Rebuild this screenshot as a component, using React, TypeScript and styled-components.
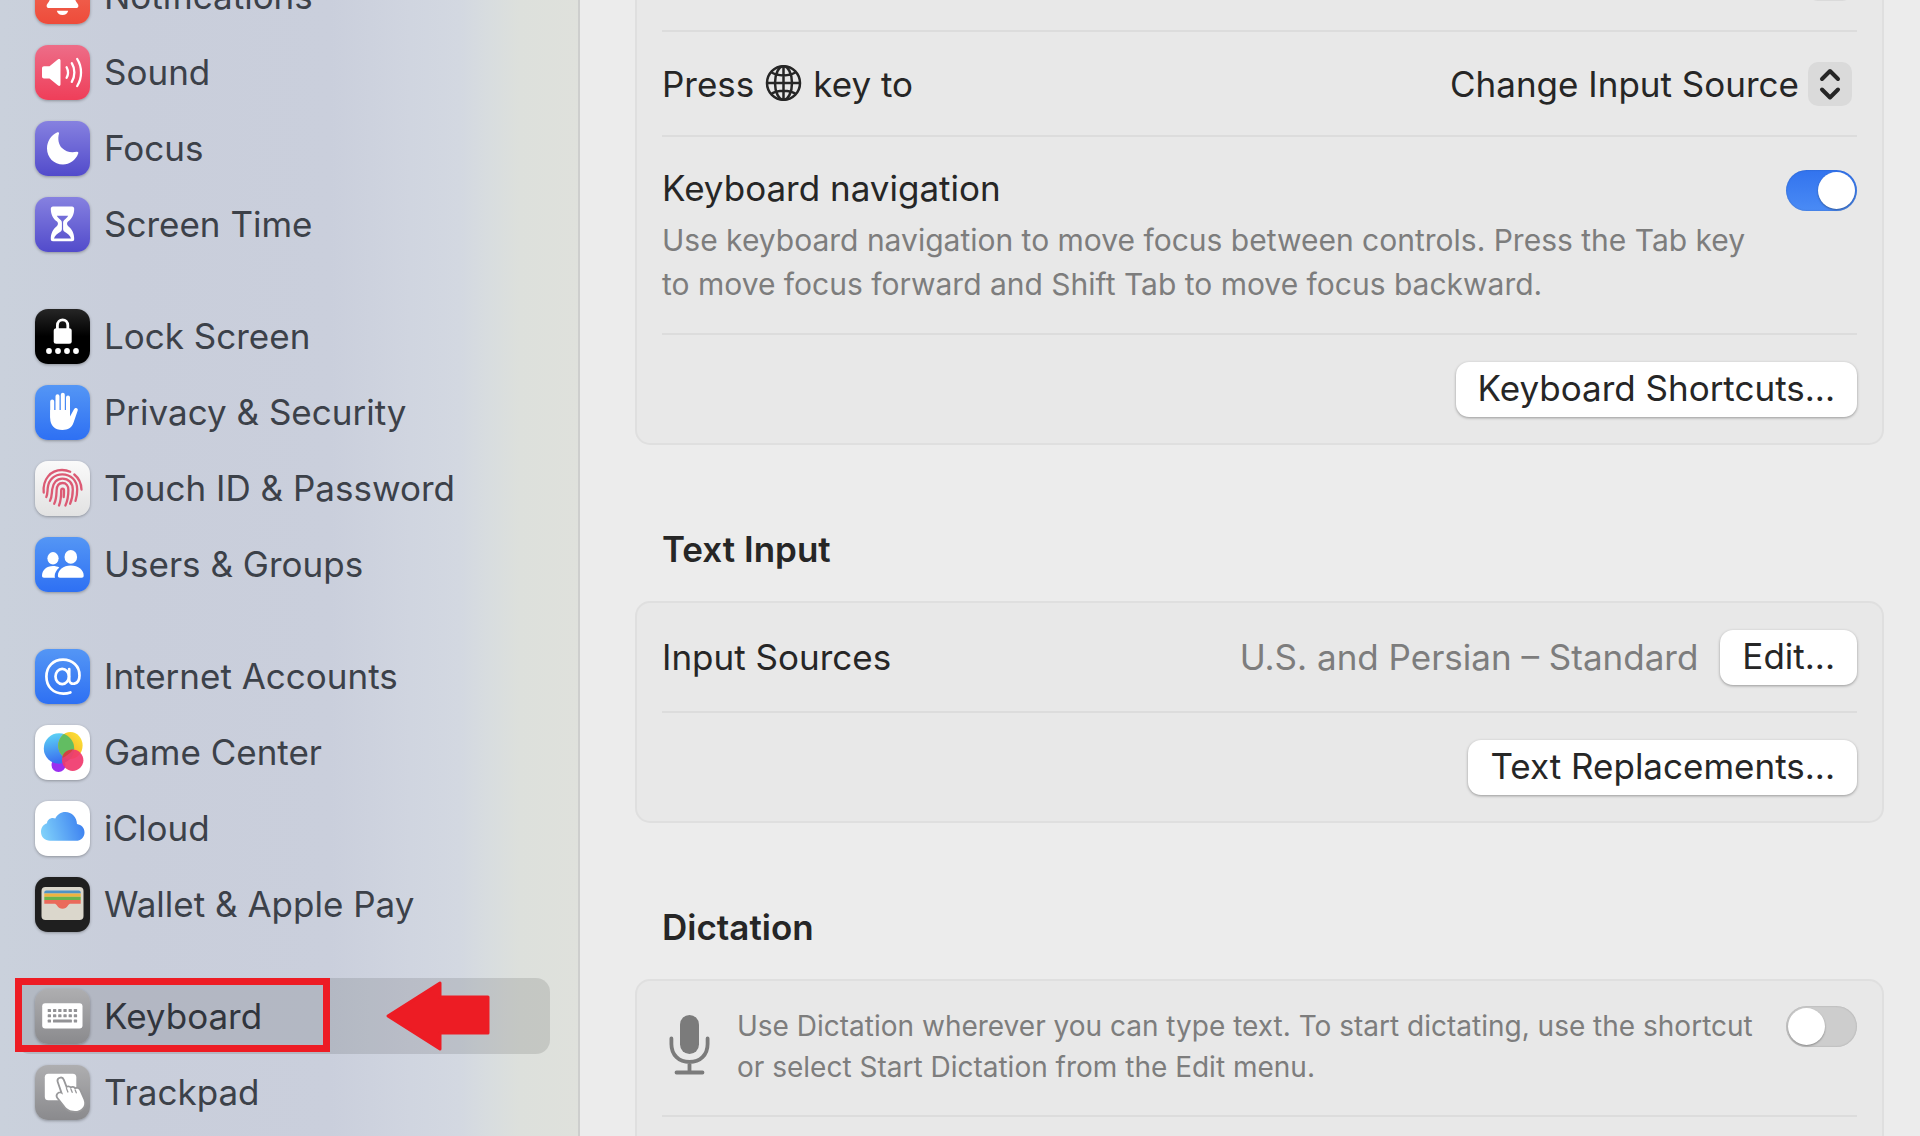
import React, { useState } from "react";
import styled, { createGlobalStyle } from "styled-components";

const GlobalStyle = createGlobalStyle`
  *, *::before, *::after { box-sizing: border-box; }
  body {
    margin: 0;
    overflow: hidden;
    background: #ececec;
    font-family: Inter, "Liberation Sans", sans-serif;
    font-size: 35px;
    line-height: 44px;
    color: #262626;
  }
`;

const Window = styled.div`
  display: flex;
  height: 100vh;
  overflow: hidden;
`;

const Sidebar = styled.aside`
  flex: none;
  width: 580px;
  padding: 0 28px 0 16px;
  border-right: 2px solid #cdcecd;
  background: linear-gradient(
    90deg,
    #cad1dc 0,
    #c9cedb 120px,
    #cacfdc 330px,
    #d0d5e0 410px,
    #d3d8e1 460px,
    #d8dddf 490px,
    #dde0dc 520px,
    #dfe1dc 580px
  );
`;

const Nav = styled.nav`
  display: flex;
  flex-direction: column;
  gap: 36px;
  margin-top: -42px;
`;

const NavGroup = styled.ul`
  list-style: none;
  margin: 0;
  padding: 0;
`;

const NavItem = styled.li`
  position: relative;
`;

const NavLink = styled.a<{ $selected?: boolean }>`
  display: flex;
  align-items: center;
  gap: 14px;
  height: 76px;
  padding-left: 19px;
  border-radius: 14px;
  color: ${(p) => (p.$selected ? "#31353d" : "#3c4149")};
  background: ${(p) => (p.$selected ? "rgba(0, 0, 0, 0.11)" : "transparent")};
  text-decoration: none;
  white-space: nowrap;
`;

const Tile = styled.span<{ $fill: string }>`
  display: grid;
  place-items: center;
  flex: none;
  width: 55px;
  height: 55px;
  border-radius: 13px;
  background: ${(p) => p.$fill};
  box-shadow: 0 1px 3px rgba(0, 0, 0, 0.3);

  svg {
    display: block;
  }
`;

const Highlight = styled.span`
  position: absolute;
  top: 0;
  left: -1px;
  width: 315px;
  height: 74px;
  border: 7px solid #ed1c24;
  pointer-events: none;
`;

const Arrow = styled.svg`
  position: absolute;
  top: 3px;
  left: 370px;
  pointer-events: none;
`;

const Main = styled.main`
  flex: 1;
  min-width: 0;
  padding: 0 36px 0 55px;
`;

const Card = styled.section<{ $scrolled?: boolean }>`
  margin-top: ${(p) => (p.$scrolled ? "-75px" : "0")};
  padding: 0 25px;
  border: 2px solid #dfdfdf;
  border-radius: 15px;
  background: #e8e8e8;
`;

const Row = styled.div<{ $end?: boolean; $top?: boolean }>`
  display: flex;
  box-sizing: content-box;
  align-items: ${(p) => (p.$top ? "flex-start" : "center")};
  justify-content: ${(p) => (p.$end ? "flex-end" : "space-between")};
  gap: 22px;
  min-height: ${(p) => (p.$top ? "82px" : "103px")};
  padding: ${(p) => (p.$top ? "25px 0 27px" : "0")};

  & + & {
    border-top: 2px solid #dcdcdc;
  }
`;

const ButtonRow = styled(Row)`
  min-height: 108px;
`;

const Heading = styled.h2`
  margin: 82px 0 30px;
  padding-left: 27px;
  font-size: 35px;
  line-height: 44px;
  font-weight: 600;
`;

const Label = styled.label`
  display: flex;
  align-items: center;
  gap: 11px;
`;

const Copy = styled.div<{ $spaced?: boolean }>`
  flex: 1;
  padding-top: ${(p) => (p.$spaced ? "4px" : "0")};
`;

const Note = styled.p<{ $small?: boolean }>`
  display: block;
  margin: ${(p) => (p.$small ? "0" : "8px 0 0")};
  color: #7d7d7d;
  font-size: ${(p) => (p.$small ? "28px" : "30px")};
  line-height: ${(p) => (p.$small ? "41px" : "44px")};
  white-space: nowrap;
`;

const Value = styled.span`
  margin-left: auto;
  color: #7d7d7d;
`;

const PushButton = styled.button`
  height: 55px;
  padding: 0 22px 2px;
  border: 0;
  border-radius: 13px;
  background: #fff;
  box-shadow: 0 1px 3px rgba(0, 0, 0, 0.35);
  color: #262626;
  font: inherit;
  white-space: nowrap;
`;

const Popup = styled.div`
  position: relative;
  margin-right: 5px;
`;

const Select = styled.select`
  appearance: none;
  display: block;
  height: 44px;
  min-width: 44px;
  padding: 0 53px 0 0;
  border: 0;
  background: transparent;
  color: #262626;
  font: inherit;
`;

const Chip = styled.span`
  position: absolute;
  top: 0;
  right: 0;
  width: 44px;
  height: 44px;
  border-radius: 10px;
  background: #dadada;
  pointer-events: none;
`;

const MicIcon = styled.svg`
  flex: none;
  margin-top: 8px;
`;

const Switch = styled.input<{ $lowered?: boolean }>`
  appearance: none;
  flex: none;
  width: 71px;
  height: 41px;
  margin: ${(p) => (p.$lowered ? "8px" : "0")} 0 0;
  padding: 2px;
  border-radius: 21px;
  background: #cdcdcd;
  box-shadow: inset 0 0 2px rgba(0, 0, 0, 0.2);

  &::before {
    content: "";
    display: block;
    width: 37px;
    height: 37px;
    border-radius: 50%;
    background: #fff;
    box-shadow: 0 1px 2px rgba(0, 0, 0, 0.35);
  }

  &:checked {
    background: linear-gradient(#3273ee, #4a8bf5);
  }

  &:checked::before {
    margin-left: 30px;
  }
`;

const red = "linear-gradient(#f0705c, #ee4b3a)";
const pink = "linear-gradient(#ed6d88, #ef3e59)";
const violet = "linear-gradient(#8681e0, #524bcb)";
const black = "linear-gradient(#262626, #000 50%)";
const blue = "linear-gradient(#5496f5, #2e70f3)";
const pearl = "linear-gradient(#fafafa, #e2e2e2)";
const grey = "linear-gradient(#aeaeb0, #8a8a8d)";

function Glyph({ children }: { children: React.ReactNode }) {
  return (
    <svg width="55" height="55" viewBox="0 0 55 55" fill="#fff" aria-hidden="true">
      {children}
    </svg>
  );
}

const BellGlyph = () => (
  <Glyph>
    <path d="M27.500 9c-8 0-11.500 5.500-11.500 12 0 9-1.500 11-3.600 13.800-1.600 2.200-.6 4.200 1.600 4.200h27c2.200 0 3.200-2 1.600-4.200C40.500 32 39 30 39 21c0-6.500-3.500-12-11.500-12z" />
    <path d="M21.800 41.700h11.400c-.6 2.700-2.800 4.300-5.700 4.300s-5.100-1.600-5.700-4.300z" />
  </Glyph>
);

const SoundGlyph = () => (
  <Glyph>
    <path d="M9 21.300h5.500l8.600-7c1.200-.9 2.400-.3 2.400 1.200v23.800c0 1.500-1.200 2.100-2.400 1.200l-8.600-7H9c-1.200 0-2-.8-2-2v-8.200c0-1.200.8-2 2-2z" />
    <g fill="none" stroke="#fff" strokeWidth="2.300" strokeLinecap="round">
      <path d="M31.600 22.200c1.700 3.200 1.700 7.400 0 10.600" />
      <path d="M36.800 18.200c3.400 5.500 3.400 13.100 0 18.600" />
      <path d="M42.200 14c5.100 8 5.100 19 0 27" />
    </g>
  </Glyph>
);

const MoonGlyph = () => (
  <Glyph>
    <path d="M22.400 11.300c.9-.5 1.900.2 1.600 1.200-1.500 5.500-.5 11 3 14.600 3.700 3.800 9.200 4.900 14.700 3.700 1.200-.3 2 .7 1.500 1.700C40.700 39.200 34.500 43.500 28 43.500c-9 0-16-7-16-16 0-7 4-13.300 10.400-16.200z" />
  </Glyph>
);

const HourglassGlyph = () => (
  <Glyph>
    <path
      fillRule="evenodd"
      d="M18 9.500h19c1.500 0 2.200 1 2.200 2.300 0 5.500-2.200 10-6.200 12.800-1.300 1-1.300 3.300 0 4.300 4 3 6.200 7.500 6.200 13 0 1.300-.7 2.300-2.200 2.300H18c-1.500 0-2.200-1-2.200-2.300 0-5.500 2.200-10 6.200-13 1.300-1 1.300-3.300 0-4.300-4-2.800-6.200-7.300-6.200-12.800 0-1.300.7-2.300 2.200-2.300zM21.800 18.800c1 1.800 2.300 3 3.900 4.200 1 .8 1.200 1.800 1.200 3v6c0 1.200-.4 2-1.500 2.700-3.200 2-5.600 3.500-6.400 6.900h17c-.8-3.400-3.200-4.900-6.400-6.900-1.100-.7-1.500-1.500-1.500-2.700v-6c0-1.200.2-2.200 1.200-3 1.600-1.200 2.900-2.400 3.900-4.200z"
    />
  </Glyph>
);

const LockGlyph = () => (
  <Glyph>
    <rect x="18.700" y="19.300" width="18" height="15.500" rx="2.500" />
    <path d="M22.400 20.500v-4c0-7.600 10.400-7.600 10.400 0v4" fill="none" stroke="#fff" strokeWidth="2.800" />
    {[14, 23, 32, 41].map((x) => (
      <circle key={x} cx={x} cy="42" r="2.900" />
    ))}
  </Glyph>
);

const HandGlyph = () => (
  <Glyph>
    <g stroke="#fff" strokeWidth="4" strokeLinecap="round">
      <path d="M17.200 16.500V32M22.500 11.300V30M27.800 9.800V30M33 12.500V30" />
    </g>
    <path d="M15.200 25h19.800v6.500l4-7.300c1.300-2.300 4.500-1.300 3.700 1.300l-4.200 12.300C36.800 42.700 33 45 27.500 45c-8 0-12.300-4.600-12.300-12z" />
  </Glyph>
);

const FingerprintGlyph = () => (
  <Glyph>
    <g fill="none" stroke="#dc5a74" strokeWidth="2.300" strokeLinecap="round">
      <path d="M8.700 31.500C7.500 18.500 15.500 9 27 9c3 0 5.800.6 8.200 1.700" />
      <path d="M39.300 13.500c4.400 3.500 6.900 8.800 7.200 15" />
      <path d="M11.300 36c1.400-2.800 1-5.500 1.500-9.500C13.800 18.300 19.800 13.300 27.200 13.300c8.800 0 14.900 6.200 15 15 .1 4.500-.5 8-1.700 11.500" />
      <path d="M15 39.700c2-3.500 1.700-7.200 2.200-11.400.7-6.600 4.800-10.700 10.200-10.700 6.200 0 10.400 4.500 10.400 11 0 5.600-.8 10-2.700 14.200" />
      <path d="M19.200 42.700c2.200-4.200 2.200-8.500 2.400-13.200.2-4.700 2.400-7.500 5.900-7.500 3.700 0 5.900 2.800 5.900 7 0 6-.9 10.800-3 15.500" />
      <path d="M24 44.500c1.900-4.500 2.200-9 2.200-15 0-2.500 2.800-2.500 2.800 0 0 2.500 0 4.500-.3 6.500" />
    </g>
  </Glyph>
);

const UsersGlyph = () => (
  <Glyph>
    <ellipse cx="18" cy="21.300" rx="5.600" ry="6.200" />
    <path d="M9 40.700c-1.300 0-2-.8-2-2 0-5.500 4.600-9.700 11-9.700 2.400 0 4.500.5 6.300 1.500-3 2.600-4.600 5.600-4.600 8.600 0 .6.100 1.100.3 1.600z" />
    <ellipse cx="35.800" cy="19.900" rx="6.300" ry="6.800" />
    <path d="M24.900 40.700c-1.300 0-2-.8-2-2 0-5.700 5.300-10.200 12.900-10.200s12.900 4.500 12.900 10.200c0 1.200-.7 2-2 2z" />
  </Glyph>
);

const AtGlyph = () => (
  <Glyph>
    <g fill="none" stroke="#fff" strokeWidth="2.700" strokeLinecap="round" strokeLinejoin="round">
      <ellipse cx="27.200" cy="27.500" rx="6.700" ry="7.700" />
      <path d="M34.200 20v11c0 5.600 10.300 5.500 10.300-4.600C44.500 17 37.500 10.700 28 10.700c-9.800 0-16.600 6.900-16.600 16.800 0 10.200 6.900 17.100 17 17.100 2.500 0 5-.4 7-1.100" />
    </g>
  </Glyph>
);

const GameGlyph = () => (
  <Glyph>
    <defs>
      <linearGradient id="gcBlue" x1="0" y1="0" x2="0.200" y2="1">
        <stop offset="0" stopColor="#5fd9f5" />
        <stop offset="1" stopColor="#3a6ff0" />
      </linearGradient>
      <linearGradient id="gcYellow" x1="0" y1="1" x2="1" y2="0">
        <stop offset="0" stopColor="#f59a1c" />
        <stop offset="1" stopColor="#fbe93a" />
      </linearGradient>
      <clipPath id="gcClip">
        <circle cx="24" cy="23.500" r="15.200" />
      </clipPath>
    </defs>
    <circle cx="23.500" cy="40" r="7" fill="#9a2ff0" />
    <circle cx="24" cy="23.500" r="15.200" fill="url(#gcBlue)" />
    <ellipse cx="35.400" cy="20.500" rx="12.200" ry="13.500" fill="url(#gcYellow)" />
    <ellipse cx="35.400" cy="20.500" rx="12.200" ry="13.500" fill="#62bd62" clipPath="url(#gcClip)" />
    <circle cx="37.700" cy="35.200" r="10.700" fill="#f03a6e" fillOpacity="0.930" />
    <path d="M27.500 33c3.300-1.500 8-4.500 10.500-8.400-6 0-10.800 3.800-10.500 8.400z" fill="#d0453f" />
  </Glyph>
);

const CloudGlyph = () => (
  <Glyph>
    <defs>
      <linearGradient id="cloudFill" x1="0" y1="0.600" x2="1" y2="0.400">
        <stop offset="0" stopColor="#7fd0fa" />
        <stop offset="1" stopColor="#3b7ff0" />
      </linearGradient>
    </defs>
    <path
      fill="url(#cloudFill)"
      d="M15 39.700c-5 0-9-3.700-9-9 0-4.300 2.500-7.400 6-8.500.3-4 4.500-6.300 8.300-4.700 2-4 5.500-6.500 10-6.500 6.700 0 11.500 5 11.700 12.100 4.500.8 7.500 4 7.500 8.300 0 4.800-3.700 8.300-8.500 8.300z"
    />
  </Glyph>
);

const WalletGlyph = () => (
  <Glyph>
    <rect x="6.500" y="10" width="42" height="33" rx="4" fill="#dbd7cc" />
    <path d="M9.300 16.500v-1c0-1.200.8-2 2-2h32.400c1.200 0 2 .8 2 2v1z" fill="#4f93c4" />
    <rect x="9.300" y="16.500" width="36.400" height="3.300" fill="#f0b33e" />
    <rect x="9.300" y="19.800" width="36.400" height="3.300" fill="#69b34c" />
    <path d="M9.300 23.100h36.400v3.700H36c-1.600 0-2.200.5-3 1.700-2.700 4.300-8.300 4.300-11 0-.8-1.200-1.400-1.700-3-1.700H9.300z" fill="#ea6a5b" />
  </Glyph>
);

const KeyboardGlyph = () => (
  <Glyph>
    <rect x="7.200" y="14.300" width="40.300" height="25.200" rx="3" />
    <g fill="#929295">
      {[20, 25.300].map((y) =>
        [12.700, 18, 23.200, 28.400, 33.600, 38.800].map((x) => (
          <rect key={`${x}-${y}`} x={x} y={y} width="3.300" height="3" rx="0.600" />
        )),
      )}
      <rect x="12.700" y="30.600" width="3.300" height="3" rx="0.600" />
      <rect x="18" y="30.600" width="18.900" height="3" rx="0.600" />
      <rect x="38.800" y="30.600" width="3.300" height="3" rx="0.600" />
    </g>
  </Glyph>
);

const TrackpadGlyph = () => (
  <Glyph>
    <rect x="9.800" y="8.700" width="31.500" height="26.500" rx="3.500" />
    <path
      d="M23.500 16.500c-.8-3 3.400-4.300 4.500-1.300l3.200 8.300c1-1.700 3.500-1.500 4.300.3 1.200-1.500 3.500-1.200 4.300.7 1.600-1.200 4-.7 4.800 1.200l3.900 8.700c2.900 6.800-2.500 11.600-8.500 11.600-5 0-8-2-10.400-5.200l-6.500-8.300c-1.800-2.600 1.200-5.500 4-3.500l1 .8z"
      stroke="#98989a"
      strokeWidth="3.600"
      strokeLinejoin="round"
      paintOrder="stroke"
    />
    <path d="M31.500 23.500l1.400 3.500M35.900 24l1.300 3.300M40.200 25l1.100 2.800" stroke="#98989a" strokeWidth="1.300" strokeLinecap="round" />
  </Glyph>
);

type Item = { name: string; fill: string; icon: React.ReactNode };

const groups: Item[][] = [
  [
    { name: "Notifications", fill: red, icon: <BellGlyph /> },
    { name: "Sound", fill: pink, icon: <SoundGlyph /> },
    { name: "Focus", fill: violet, icon: <MoonGlyph /> },
    { name: "Screen Time", fill: violet, icon: <HourglassGlyph /> },
  ],
  [
    { name: "Lock Screen", fill: black, icon: <LockGlyph /> },
    { name: "Privacy & Security", fill: blue, icon: <HandGlyph /> },
    { name: "Touch ID & Password", fill: pearl, icon: <FingerprintGlyph /> },
    { name: "Users & Groups", fill: blue, icon: <UsersGlyph /> },
  ],
  [
    { name: "Internet Accounts", fill: blue, icon: <AtGlyph /> },
    { name: "Game Center", fill: "#fff", icon: <GameGlyph /> },
    { name: "iCloud", fill: "#fff", icon: <CloudGlyph /> },
    { name: "Wallet & Apple Pay", fill: "#1f1f1f", icon: <WalletGlyph /> },
  ],
  [
    { name: "Keyboard", fill: grey, icon: <KeyboardGlyph /> },
    { name: "Trackpad", fill: grey, icon: <TrackpadGlyph /> },
  ],
];

const Globe = () => (
  <svg width="37" height="44" viewBox="0 0 37 44" fill="none" stroke="#262626" strokeWidth="2.500" aria-hidden="true">
    <ellipse cx="18.500" cy="21" rx="16.500" ry="16.800" />
    <ellipse cx="18.500" cy="21" rx="8.500" ry="16.800" />
    <path d="M18.500 4.200v33.600M2 21h33M6 10c6.500 4.500 18.500 4.500 25 0M6 32c6.500-4.500 18.500-4.500 25 0" />
  </svg>
);

const Chevrons = () => (
  <svg width="44" height="44" viewBox="0 0 44 44" fill="none" stroke="#262626" strokeWidth="4" strokeLinecap="round" strokeLinejoin="round" aria-hidden="true">
    <path d="M14 17l8-8 8 8M14 27.500l8 8 8-8" />
  </svg>
);

const Mic = () => (
  <MicIcon width="53" height="62" viewBox="0 0 53 62" fill="none" stroke="#7b7b7b" strokeWidth="3.800" strokeLinecap="round" aria-hidden="true">
    <rect x="18" y="1" width="19" height="39" rx="9.500" fill="#7b7b7b" stroke="none" />
    <path d="M9.400 24.500v5.500c0 11 7.500 18 18.100 18s18.100-7 18.100-18v-5.500M27.500 48v10.500M14.500 58.500h26" />
  </MicIcon>
);

export default function App() {
  const [navigation, setNavigation] = useState(true);
  const [dictation, setDictation] = useState(false);

  return (
    <>
      <GlobalStyle />
      <Window>
        <Sidebar>
          <Nav>
            {groups.map((items) => (
              <NavGroup key={items[0].name}>
                {items.map(({ name, fill, icon }) => (
                  <NavItem key={name}>
                    <NavLink href="#" $selected={name === "Keyboard"}>
                      <Tile $fill={fill}>{icon}</Tile>
                      {name}
                    </NavLink>
                    {name === "Keyboard" && (
                      <>
                        <Highlight />
                        <Arrow width="105" height="70" viewBox="0 0 105 70" aria-hidden="true">
                          <path
                            d="M2 35L54 2v14h48v36H54v16z"
                            fill="#ed1c24"
                            stroke="#ed1c24"
                            strokeWidth="3"
                            strokeLinejoin="round"
                          />
                        </Arrow>
                      </>
                    )}
                  </NavItem>
                ))}
              </NavGroup>
            ))}
          </Nav>
        </Sidebar>
        <Main>
          <Card $scrolled>
            <Row $end>
              <Popup>
                <Select aria-label="Key option" />
                <Chip />
              </Popup>
            </Row>
            <Row>
              <Label htmlFor="globe-key">
                Press <Globe /> key to
              </Label>
              <Popup>
                <Select id="globe-key">
                  <option>Change Input Source</option>
                </Select>
                <Chip>
                  <Chevrons />
                </Chip>
              </Popup>
            </Row>
            <Row $top>
              <Copy $spaced>
                <Label htmlFor="keyboard-navigation">Keyboard navigation</Label>
                <Note>
                  Use keyboard navigation to move focus between controls. Press the Tab key
                  <br />
                  to move focus forward and Shift Tab to move focus backward.
                </Note>
              </Copy>
              <Switch
                id="keyboard-navigation"
                type="checkbox"
                $lowered
                checked={navigation}
                onChange={() => setNavigation(!navigation)}
              />
            </Row>
            <ButtonRow $end>
              <PushButton>Keyboard Shortcuts...</PushButton>
            </ButtonRow>
          </Card>

          <Heading>Text Input</Heading>
          <Card>
            <ButtonRow>
              Input Sources
              <Value>U.S. and Persian – Standard</Value>
              <PushButton>Edit...</PushButton>
            </ButtonRow>
            <ButtonRow $end>
              <PushButton>Text Replacements...</PushButton>
            </ButtonRow>
          </Card>

          <Heading>Dictation</Heading>
          <Card>
            <Row $top>
              <Mic />
              <Copy>
                <Note as="label" htmlFor="dictation" $small>
                  Use Dictation wherever you can type text. To start dictating, use the shortcut
                  <br />
                  or select Start Dictation from the Edit menu.
                </Note>
              </Copy>
              <Switch
                id="dictation"
                type="checkbox"
                checked={dictation}
                onChange={() => setDictation(!dictation)}
              />
            </Row>
            <Row />
          </Card>
        </Main>
      </Window>
    </>
  );
}
